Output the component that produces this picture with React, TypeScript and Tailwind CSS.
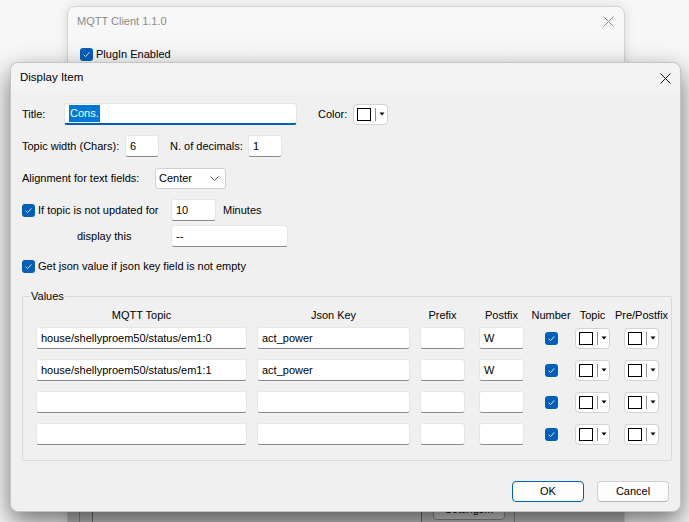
import React from 'react';

const Check = () => (
  <span className="w-[13px] h-[13px] rounded-[3px] bg-[#005fb8] flex items-center justify-center shrink-0">
    <svg width="9" height="9" viewBox="0 0 9 9">
      <path d="M1.6 4.7 L3.6 6.6 L7.4 2.4" fill="none" stroke="#d6e6f6" strokeWidth="1" />
    </svg>
  </span>
);

const TextBox: React.FC<{ className?: string; value?: string }> = ({ className = '', value = '' }) => (
  <div
    className={`h-[22px] bg-white border border-[#e6e6e6] border-b-[#8a8a8a] rounded-[3px] pl-[4px] flex items-center text-black ${className}`}
  >
    {value}
  </div>
);

const ColorPick: React.FC<{ className?: string }> = ({ className = '' }) => (
  <div
    className={`w-[35px] h-[21px] bg-white border border-[#d2d2d2] rounded-[4px] flex items-center pl-[3px] ${className}`}
  >
    <div className="w-[14px] h-[13px] border border-black bg-white" />
    <div className="w-px h-[13px] bg-[#8f8f8f] ml-[4px]" />
    <svg width="6" height="4" viewBox="0 0 6 4" className="ml-[3px]">
      <path d="M0.5 0.5 H5.5 L3 3.5 Z" fill="#000" />
    </svg>
  </div>
);

const CloseX: React.FC<{ color: string }> = ({ color }) => (
  <svg width="11" height="11" viewBox="0 0 11 11">
    <path d="M0.5 0.5 L10.5 10.5 M10.5 0.5 L0.5 10.5" stroke={color} strokeWidth="1" />
  </svg>
);

const rows = [
  { topic: 'house/shellyproem50/status/em1:0', key: 'act_power', post: 'W' },
  { topic: 'house/shellyproem50/status/em1:1', key: 'act_power', post: 'W' },
  { topic: '', key: '', post: '' },
  { topic: '', key: '', post: '' },
];

export default function App() {
  return (
    <div className="relative w-[689px] h-[522px] overflow-hidden bg-[#f7f7f7] font-['Liberation_Sans',Arial,sans-serif] text-[11px] text-black">
      {/* parent window */}
      <div className="absolute left-[67px] top-[6px] w-[558px] h-[540px] bg-gradient-to-b from-[#f8f8f8] to-[#ececec] border border-[#d4d4d4] rounded-[8px] shadow-[0_0_12px_rgba(0,0,0,0.12)] flex flex-col">
        <div className="h-[29px] flex items-center justify-between pl-[9px] pr-[10px] text-[#8a8a8a] text-[11px]">
          <span>MQTT Client 1.1.0</span>
          <CloseX color="#8a8a8a" />
        </div>
        <div className="flex items-center pl-[12px] mt-[10px] gap-[3px]">
          <Check />
          <span>PlugIn Enabled</span>
        </div>
        <div className="flex-1" />
        <div className="h-[46px] bg-[#bdbdbd] flex items-start">
          <div className="ml-[11px] h-full border-l border-[#8c8c8c]" />
          <div className="ml-[12px] w-[330px] h-full border-x border-[#6c6c6c] bg-[#c4c4c4]" />
          <div className="ml-[11px] w-[72px] h-[21px] border border-[#8a8a8a] rounded-[4px] bg-[#d2d2d2] flex items-center justify-center">
            Settings...
          </div>
          <div className="ml-[9px] h-full border-l border-[#8c8c8c]" />
        </div>
      </div>

      {/* dialog */}
      <div className="absolute left-[10px] top-[62px] w-[671px] h-[450px] bg-[#f0f0f0] border border-[#c4c4c4] rounded-[8px] shadow-[0_10px_26px_rgba(0,0,0,0.55)] flex flex-col">
        <div className="h-[30px] bg-[#f3f3f3] rounded-t-[8px] flex items-center justify-between pl-[9px] pr-[9px]">
          <span className="text-[11.5px]">Display Item</span>
          <CloseX color="#1a1a1a" />
        </div>

        <div className="flex flex-col pl-[11px] pr-[8px]">
          <div className="mt-[10px] h-[22px] flex items-center">
            <span className="w-[42px]">Title:</span>
            <div className="w-[233px] h-[22px] bg-white border border-[#e6e6e6] border-b-2 border-b-[#005fb8] rounded-[3px] pl-[4px] flex items-center">
              <span className="bg-[#0078d7] text-white px-[1px]">Cons.</span>
            </div>
            <span className="ml-[21px] w-[35px]">Color:</span>
            <ColorPick />
          </div>

          <div className="mt-[10px] h-[22px] flex items-center">
            <span className="w-[103px]">Topic width (Chars):</span>
            <TextBox className="w-[34px]" value="6" />
            <span className="ml-[11px] w-[78px]">N. of decimals:</span>
            <TextBox className="w-[34px]" value="1" />
          </div>

          <div className="mt-[11px] h-[21px] flex items-center">
            <span className="w-[133px]">Alignment for text fields:</span>
            <div className="w-[71px] h-[21px] bg-white border border-[#d0d0d0] rounded-[3px] flex items-center justify-between pl-[3px] pr-[6px]">
              <span>Center</span>
              <svg width="9" height="5" viewBox="0 0 9 5">
                <path d="M0.5 0.5 L4.5 4.5 L8.5 0.5" fill="none" stroke="#555" strokeWidth="1" />
              </svg>
            </div>
          </div>

          <div className="mt-[10px] h-[22px] flex items-center">
            <Check />
            <span className="ml-[3px] w-[133px]">If topic is not updated for</span>
            <TextBox className="w-[45px]" value="10" />
            <span className="ml-[7px]">Minutes</span>
          </div>

          <div className="mt-[4px] h-[22px] flex items-center">
            <span className="ml-[55px] w-[94px]">display this</span>
            <TextBox className="w-[117px]" value="--" />
          </div>

          <div className="mt-[12px] h-[14px] flex items-center">
            <Check />
            <span className="ml-[3px]">Get json value if json key field is not empty</span>
          </div>

          <div className="relative mt-[23px] w-[650px] border border-[#dadada] rounded-[2px] pt-[11px] pb-[15px] pl-[13px]">
            <span className="absolute left-[7px] -top-[7px] leading-[13px] px-[1px] bg-[#f0f0f0]">Values</span>
            <div className="flex h-[14px] items-center">
              <span className="w-[211px] flex justify-center">MQTT Topic</span>
              <span className="ml-[10px] w-[153px] flex justify-center">Json Key</span>
              <span className="ml-[10px] w-[45px] flex justify-center">Prefix</span>
              <span className="ml-[14px] w-[45px] flex justify-center">Postfix</span>
              <span className="ml-[5px] w-[44px] flex justify-center">Number</span>
              <span className="ml-[2px] w-[35px] flex justify-center">Topic</span>
              <span className="ml-[14px] w-[35px] flex justify-center whitespace-nowrap">Pre/Postfix</span>
            </div>
            <div className="mt-[5px] flex flex-col gap-[10px]">
              {rows.map((r, i) => (
                <div key={i} className="flex items-center h-[22px]">
                  <TextBox className="w-[211px]" value={r.topic} />
                  <TextBox className="ml-[10px] w-[153px]" value={r.key} />
                  <TextBox className="ml-[10px] w-[45px]" />
                  <TextBox className="ml-[14px] w-[45px]" value={r.post} />
                  <div className="ml-[5px] w-[44px] flex justify-center">
                    <Check />
                  </div>
                  <ColorPick className="ml-[2px]" />
                  <ColorPick className="ml-[14px]" />
                </div>
              ))}
            </div>
          </div>

          <div className="mt-[20px] flex justify-end pr-[3px] gap-[13px]">
            <div className="w-[72px] h-[21px] bg-[#fdfdfd] border border-[#005fb8] rounded-[4px] flex items-center justify-center">
              OK
            </div>
            <div className="w-[72px] h-[21px] bg-[#fdfdfd] border border-[#d0d0d0] border-b-[#b5b5b5] rounded-[4px] flex items-center justify-center">
              Cancel
            </div>
          </div>
        </div>
      </div>
    </div>
  );
}
